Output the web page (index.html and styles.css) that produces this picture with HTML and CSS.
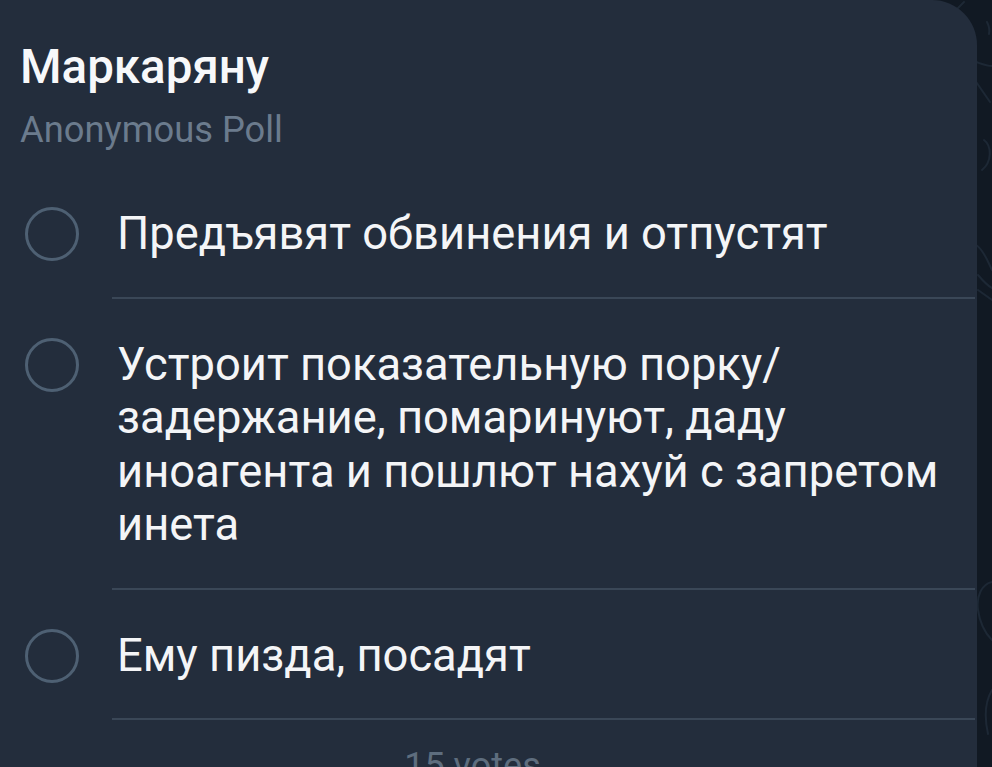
FILE: index.html
```html
<!DOCTYPE html>
<html lang="ru">
<head>
<meta charset="utf-8">
<title>Poll</title>
<link rel="stylesheet" href="styles.css">
</head>
<body>
<svg class="doodles" width="60" height="767" viewBox="0 0 60 767" aria-hidden="true">
  <g fill="none" stroke="#1d2835" stroke-width="2" stroke-linecap="round">
    <path d="M26 8 L32 2"/>
    <path d="M55 22 C57 26 58 30 57 34"/>
    <path d="M44 62 C50 64 55 66 60 66"/>
    <path d="M40 76 L58 102"/>
    <path d="M52 140 C60 146 60 162 50 170"/>
    <path d="M44 245 C52 250 56 262 60 270"/>
    <path d="M46 275 C52 282 56 286 60 288"/>
    <path d="M46 290 L60 300"/>
    <path d="M60 582 C50 584 44 596 46 610 C48 624 54 634 60 640"/>
    <path d="M60 690 C54 700 52 716 56 734"/>
  </g>
</svg>
<div class="bubble">
  <div class="title">Маркаряну</div>
  <div class="subtitle">Anonymous Poll</div>
  <div class="options">
    <div class="option">
      <div class="row">
        <svg class="radio" width="54" height="54" viewBox="0 0 54 54"><circle cx="27" cy="27" r="25.5" fill="none" stroke="#4e6073" stroke-width="3"/></svg>
        <div class="text">Предъявят обвинения и отпустят</div>
      </div>
      <div class="sep"></div>
    </div>
    <div class="option">
      <div class="row">
        <svg class="radio" width="54" height="54" viewBox="0 0 54 54"><circle cx="27" cy="27" r="25.5" fill="none" stroke="#4e6073" stroke-width="3"/></svg>
        <div class="text">Устроит показательную порку/<br>задержание, помаринуют, даду<br>иноагента и пошлют нахуй с запретом<br>инета</div>
      </div>
      <div class="sep"></div>
    </div>
    <div class="option">
      <div class="row">
        <svg class="radio" width="54" height="54" viewBox="0 0 54 54"><circle cx="27" cy="27" r="25.5" fill="none" stroke="#4e6073" stroke-width="3"/></svg>
        <div class="text">Ему пизда, посадят</div>
      </div>
      <div class="sep"></div>
    </div>
  </div>
  <div class="votes">15 votes</div>
</div>
</body>
</html>
```
FILE: styles.css
```css
html, body {
  margin: 0;
  padding: 0;
  height: 767px;
  overflow: hidden;
  background: #111923;
  font-family: Roboto, "Noto Sans", sans-serif;
}
.doodles {
  position: absolute;
  top: 0;
  right: 0;
}
.bubble {
  position: relative;
  margin-left: -32px;
  width: 1009px;
  min-height: 820px;
  background: #232d3c;
  border-top-right-radius: 45px;
  padding-top: 40px;
  box-sizing: border-box;
}
.title {
  padding-left: 52px;
  font-size: 47.5px;
  line-height: 54px;
  font-weight: 500;
  color: #f7f8fa;
}
.subtitle {
  margin-top: 15px;
  padding-left: 52px;
  font-size: 36.3px;
  line-height: 42px;
  color: #6b7b8d;
}
.options {
  margin-top: 17px;
  padding-left: 32px;
}
.option {
  padding-top: 39px;
}
.row {
  display: flex;
  align-items: flex-start;
}
.radio {
  flex: none;
  margin-left: 25px;
  margin-top: 0;
}
.text {
  margin-left: 38px;
  font-size: 45.3px;
  line-height: 53.5px;
  color: #f4f5f7;
  padding-bottom: 36px;
}
.sep {
  margin-left: 112px;
  margin-right: 2px;
  height: 2px;
  background: #3a4757;
}
.votes {
  margin-top: 25px;
  text-align: center;
  font-size: 36px;
  line-height: 42px;
  color: #5e6d7e;
}
```
